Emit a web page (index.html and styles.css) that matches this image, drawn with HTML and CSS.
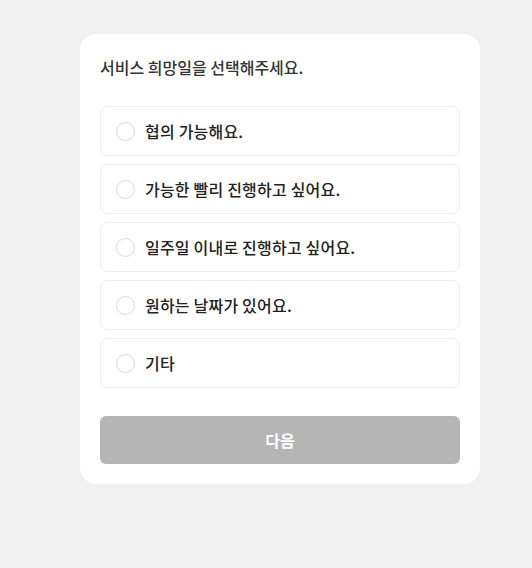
FILE: index.html
```html
<!DOCTYPE html>
<html>
<head>
<meta charset="utf-8"/>
<link rel="stylesheet" href="styles.css">
</head>
<body>
<div class="card">
	<p class="title">서비스 희망일을 선택해주세요.</p>
	<ul class="options">
		<li class="opt"><span class="radio"></span>협의 가능해요.</li>
		<li class="opt"><span class="radio"></span>가능한 빨리 진행하고 싶어요.</li>
		<li class="opt"><span class="radio"></span>일주일 이내로 진행하고 싶어요.</li>
		<li class="opt"><span class="radio"></span>원하는 날짜가 있어요.</li>
		<li class="opt"><span class="radio"></span>기타</li>
	</ul>
	<button class="next">다음</button>
</div>
</body>
</html>
```

FILE: styles.css
```css
html,body{margin:0;padding:0;}
body{background:#f1f1f1;font-family:"Noto Sans CJK KR","Noto Sans",sans-serif;color:#222;}
.card{width:360px;margin:34px 0 0 80px;padding:20px;background:#fff;border-radius:16px;}
.title{margin:0 0 26px;font-size:16px;line-height:26px;font-weight:500;color:#333;}
.options{list-style:none;margin:0;padding:0;display:flex;flex-direction:column;gap:8px;}
.opt{display:flex;align-items:center;gap:10px;height:48px;padding:0 14px 0 15px;border:1px solid #eeeeee;border-radius:8px;font-size:16px;font-weight:500;letter-spacing:0.2px;}
.radio{width:17px;height:17px;border:1.5px solid #dcdcdc;border-radius:50%;}
.next{display:block;width:100%;height:48px;margin-top:28px;border:0;border-radius:6px;background:#b5b5b5;color:#fff;font-family:inherit;font-size:16px;font-weight:bold;}
```
